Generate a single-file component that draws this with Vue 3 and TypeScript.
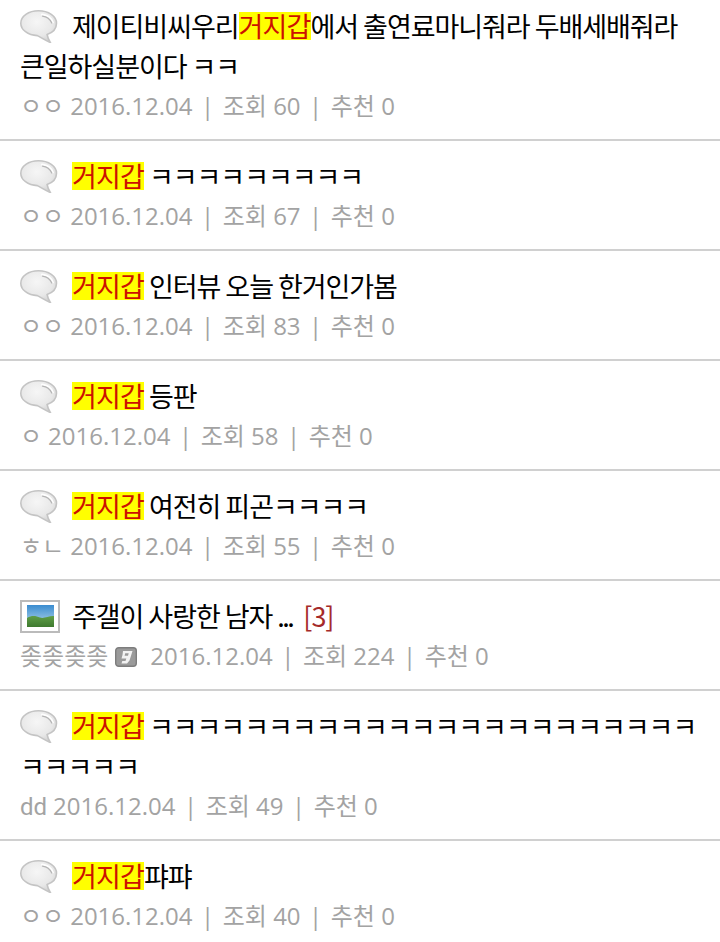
<script setup lang="ts">
interface Post {
  icon: 'bubble' | 'image'
  before?: string
  highlight?: string
  title: string
  dots?: boolean
  reply?: string
  keepWords?: boolean
  author: string
  badge?: boolean
  date: string
  views: number
}

const posts: Post[] = [
  { icon: 'bubble', before: '제이티비씨우리', highlight: '거지갑', title: '에서 출연료마니줘라 두배세배줘라 큰일하실분이다 ㅋㅋ', keepWords: true, author: 'ㅇㅇ', date: '2016.12.04', views: 60 },
  { icon: 'bubble', highlight: '거지갑', title: ' ㅋㅋㅋㅋㅋㅋㅋㅋㅋ', author: 'ㅇㅇ', date: '2016.12.04', views: 67 },
  { icon: 'bubble', highlight: '거지갑', title: ' 인터뷰 오늘 한거인가봄', author: 'ㅇㅇ', date: '2016.12.04', views: 83 },
  { icon: 'bubble', highlight: '거지갑', title: ' 등판', author: 'ㅇ', date: '2016.12.04', views: 58 },
  { icon: 'bubble', highlight: '거지갑', title: ' 여전히 피곤ㅋㅋㅋㅋ', author: 'ㅎㄴ', date: '2016.12.04', views: 55 },
  { icon: 'image', title: '주갤이 사랑한 남자 ', dots: true, reply: '[3]', author: '좆좆좆좆', badge: true, date: '2016.12.04', views: 224 },
  { icon: 'bubble', highlight: '거지갑', title: ' ㅋㅋㅋㅋㅋㅋㅋㅋㅋㅋㅋㅋㅋㅋㅋㅋㅋㅋㅋㅋㅋㅋㅋㅋㅋㅋㅋㅋ', author: 'dd', date: '2016.12.04', views: 49 },
  { icon: 'bubble', highlight: '거지갑', title: '퍄퍄', author: 'ㅇㅇ', date: '2016.12.04', views: 40 },
]
</script>

<template>
  <ul class="list">
    <li v-for="(post, i) in posts" :key="i" class="row">
      <div class="title" :class="{ keep: post.keepWords }">
        <svg v-if="post.icon === 'bubble'" class="icon" width="38" height="33" viewBox="0 0 38 33">
          <defs>
            <radialGradient :id="'bub' + i" cx="0.45" cy="0.35" r="0.75">
              <stop offset="0" stop-color="#f6f6f6" />
              <stop offset="0.6" stop-color="#e8e8e8" />
              <stop offset="1" stop-color="#c9c9c9" />
            </radialGradient>
          </defs>
          <path d="M18.500 .8C8.500 .8 .8 6.300 .8 13.200c0 6.600 7 12 16.500 12.400 3.500 1.800 7 4.300 13 6.900-1.500-2.500-2.700-5-3.200-8C33 22.400 36.500 18 36.500 13.200 36.500 6.300 28.500 .8 18.500 .8Z" :fill="'url(#bub' + i + ')'" stroke="#c4c4c4" stroke-width="1.600" />
          <path d="M22 4.500c4.800.5 9.300 3.400 11 8" fill="none" stroke="#fff" stroke-width="1.800" stroke-linecap="round" />
          <path d="M22.500 6.200c4.200.6 7.500 2.800 9.300 6.800" fill="none" stroke="#b5b5b5" stroke-width="1.300" stroke-linecap="round" />
        </svg>
        <svg v-else class="icon picture" width="40" height="33" viewBox="0 0 40 33">
          <defs>
            <linearGradient id="sky" x1="0" y1="0" x2="0" y2="1">
              <stop offset="0" stop-color="#3a8cd0" />
              <stop offset="1" stop-color="#bcdcec" />
            </linearGradient>
            <linearGradient id="hill" x1="0" y1="0" x2="0" y2="1">
              <stop offset="0" stop-color="#5f9e47" />
              <stop offset="1" stop-color="#3f7a30" />
            </linearGradient>
          </defs>
          <rect x="1" y="1" width="38" height="31" fill="#fff" stroke="#bbbbbb" stroke-width="2" />
          <rect x="7" y="5" width="27" height="22" fill="url(#sky)" />
          <path d="M7 18c5-3 9-2 13-.5s9-2 14-1.500v11H7Z" fill="url(#hill)" />
        </svg>
        <template v-if="post.before">{{ post.before }}</template><mark v-if="post.highlight">{{ post.highlight }}</mark>{{ post.title }}<span v-if="post.dots" class="dots">...</span>
        <span v-if="post.reply" class="reply">{{ post.reply }}</span>
      </div>
      <div class="meta">
        <span class="author">{{ post.author }}</span>
        <span v-if="post.badge" class="badge">
          <svg width="22" height="20" viewBox="0 0 22 20">
            <rect x=".7" y=".7" width="20.600" height="18.600" rx="3" fill="#9a9a9a" stroke="#7d7d7d" stroke-width="1.400" />
            <path d="M8 4h9.500l-3 9.500-2.500 3H6.500l.8-2.500H10.500l.8-2.500H6.500l1-3.500ZM10.200 6.300l-.6 2.500h3.400l.7-2.500Z" fill="#f2f2f2" fill-rule="evenodd" />
          </svg>
        </span>
        <span>{{ post.date }}</span>
        <span class="sep">|</span>
        <span>조회 {{ post.views }}</span>
        <span class="sep">|</span>
        <span>추천 0</span>
      </div>
    </li>
  </ul>
</template>

<style scoped>
.list {
  list-style: none;
  margin: 0;
  padding: 0;
  font-family: "Noto Sans CJK KR", "Noto Sans", sans-serif;
}

.row {
  padding: 15px 18px 13px 20px;
  border-bottom: 2px solid #d0d0d0;
}

.row:first-child {
  padding-top: 6px;
}

.title {
  font-size: 27px;
  line-height: 40px;
  color: #000;
  letter-spacing: -1.05px;
}

.keep {
  word-break: keep-all;
}

.icon {
  vertical-align: -6px;
  margin-right: 14px;
}

.picture {
  margin-right: 12px;
}

mark {
  display: inline-block;
  height: 28px;
  line-height: 28px;
  letter-spacing: -0.84px;
  background: #ffff00;
  color: #cc1100;
}

.dots {
  letter-spacing: -2.5px;
}

.reply {
  color: #a52a2a;
  margin-left: 11px;
}

.meta {
  height: 40px;
  font-family: "Open Sans", "Noto Sans CJK KR", sans-serif;
  font-size: 24px;
  line-height: 40px;
  color: #a3a3a3;
  white-space: nowrap;
}

.author {
  font-family: Roboto, "Noto Sans CJK KR", sans-serif;
  margin-right: 6px;
}

.badge {
  margin-right: 13px;
}

.badge svg {
  margin-left: 1px;
  vertical-align: -2px;
}

.sep {
  margin: 0 8.5px;
}
</style>
